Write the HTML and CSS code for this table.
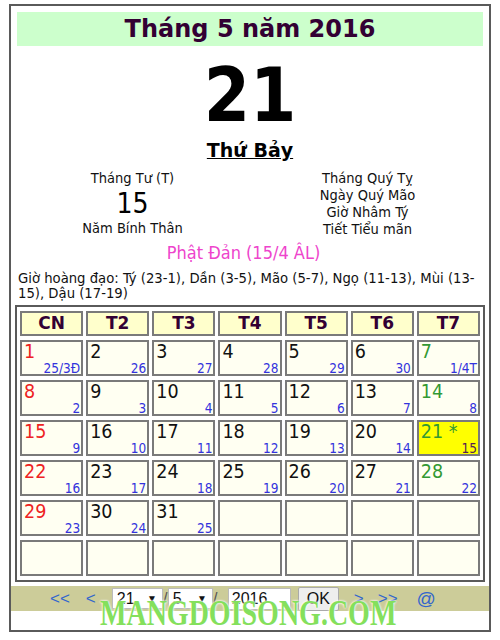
FILE: index.html
```html
<!DOCTYPE html>
<html lang="vi">
<head>
<meta charset="utf-8">
<title>Lịch tháng 5 năm 2016</title>
<link rel="stylesheet" href="styles.css">
</head>
<body>
<div class="cal">
  <div class="band">Tháng 5 năm 2016</div>
  <div class="bigday">21</div>
  <div class="weekday">Thứ Bảy</div>
  <div class="lunar">
    <div class="lcol">
      <div>Tháng Tư (T)</div>
      <div class="lday">15</div>
      <div>Năm Bính Thân</div>
    </div>
    <div class="lcol">
      <div>Tháng Quý Tỵ</div>
      <div>Ngày Quý Mão</div>
      <div>Giờ Nhâm Tý</div>
      <div>Tiết Tiểu mãn</div>
    </div>
  </div>
  <div class="event">Phật Đản (15/4 ÂL)</div>
  <div class="hours">Giờ hoàng đạo: Tý (23-1), Dần (3-5), Mão (5-7), Ngọ (11-13), Mùi (13-15), Dậu (17-19)</div>
  <table class="grid">
    <thead>
      <tr><th>CN</th><th>T2</th><th>T3</th><th>T4</th><th>T5</th><th>T6</th><th>T7</th></tr>
    </thead>
    <tbody>
      <tr>
        <td><div class="d sun">1</div><div class="l">25/3Đ</div></td>
        <td><div class="d">2</div><div class="l">26</div></td>
        <td><div class="d">3</div><div class="l">27</div></td>
        <td><div class="d">4</div><div class="l">28</div></td>
        <td><div class="d">5</div><div class="l">29</div></td>
        <td><div class="d">6</div><div class="l">30</div></td>
        <td><div class="d sat">7</div><div class="l">1/4T</div></td>
      </tr>
      <tr>
        <td><div class="d sun">8</div><div class="l">2</div></td>
        <td><div class="d">9</div><div class="l">3</div></td>
        <td><div class="d">10</div><div class="l">4</div></td>
        <td><div class="d">11</div><div class="l">5</div></td>
        <td><div class="d">12</div><div class="l">6</div></td>
        <td><div class="d">13</div><div class="l">7</div></td>
        <td><div class="d sat">14</div><div class="l">8</div></td>
      </tr>
      <tr>
        <td><div class="d sun">15</div><div class="l">9</div></td>
        <td><div class="d">16</div><div class="l">10</div></td>
        <td><div class="d">17</div><div class="l">11</div></td>
        <td><div class="d">18</div><div class="l">12</div></td>
        <td><div class="d">19</div><div class="l">13</div></td>
        <td><div class="d">20</div><div class="l">14</div></td>
        <td class="today"><div class="d sat">21 *</div><div class="l">15</div></td>
      </tr>
      <tr>
        <td><div class="d sun">22</div><div class="l">16</div></td>
        <td><div class="d">23</div><div class="l">17</div></td>
        <td><div class="d">24</div><div class="l">18</div></td>
        <td><div class="d">25</div><div class="l">19</div></td>
        <td><div class="d">26</div><div class="l">20</div></td>
        <td><div class="d">27</div><div class="l">21</div></td>
        <td><div class="d sat">28</div><div class="l">22</div></td>
      </tr>
      <tr>
        <td><div class="d sun">29</div><div class="l">23</div></td>
        <td><div class="d">30</div><div class="l">24</div></td>
        <td><div class="d">31</div><div class="l">25</div></td>
        <td></td><td></td><td></td><td></td>
      </tr>
      <tr>
        <td></td><td></td><td></td><td></td><td></td><td></td><td></td>
      </tr>
    </tbody>
  </table>
  <div class="nav">
    <a class="lnk first">&lt;&lt;</a>
    <a class="lnk prev">&lt;</a>
    <span class="sel s1">21<span class="arr">▼</span></span>
    <span class="slash">/</span>
    <span class="sel s2">5<span class="arr">▼</span></span>
    <span class="slash">/</span>
    <span class="year">2016</span>
    <span class="ok">OK</span>
    <a class="lnk next">&gt;</a>
    <a class="lnk last">&gt;&gt;</a>
    <a class="lnk at">@</a>
  </div>
  <div class="mark">MANGDOISONG.COM</div>
</div>
</body>
</html>
```
FILE: styles.css
```css
html, body {
  margin: 0;
  padding: 0;
  background: #fff;
}
body {
  font-family: "DejaVu Sans Condensed", "DejaVu Sans", sans-serif;
  color: #111;
}
.cal {
  position: relative;
  box-sizing: border-box;
  width: 482px;
  height: 628px;
  margin: 4px 0 0 9px;
  border: 2px solid #5a5a5a;
  padding: 6px 4px 0;
}
.band {
  margin: 0 2px;
  height: 34px;
  line-height: 34px;
  background: #ccffcc;
  color: #330033;
  text-align: center;
  font-family: "DejaVu Sans", sans-serif;
  font-weight: bold;
  font-size: 24px;
}
.bigday {
  margin-top: 12px;
  height: 75px;
  line-height: 75px;
  text-align: center;
  font-family: "DejaVu Sans Condensed", "DejaVu Sans", sans-serif;
  font-weight: bold;
  font-size: 74px;
  color: #000;
}
.weekday {
  margin-top: 7px;
  height: 20px;
  line-height: 20px;
  text-align: center;
  font-family: "DejaVu Sans", sans-serif;
  font-weight: bold;
  font-size: 19px;
  text-decoration: underline;
  color: #000;
}
.lunar {
  margin-top: 10px;
  display: grid;
  grid-template-columns: 1fr 1fr;
  font-size: 14.5px;
  line-height: 17px;
  text-align: center;
  color: #111;
}
.lday {
  font-size: 28px;
  line-height: 33px;
  color: #000;
}
.event {
  margin-top: 6px;
  padding-right: 13px;
  height: 18px;
  line-height: 18px;
  text-align: center;
  font-size: 18px;
  color: #ee44cc;
}
.hours {
  margin: 8px 2px 0 3px;
  font-size: 14.7px;
  line-height: 15px;
  color: #111;
}
.grid {
  margin-top: 5px;
  width: 100%;
  border: 2px solid #5a5a5a;
  border-spacing: 3px 4px;
  table-layout: fixed;
}
.grid th {
  height: 25px;
  padding: 0;
  box-sizing: border-box;
  border: 2px solid #7a7a7a;
  background: #ffffcc;
  color: #330033;
  font-family: "DejaVu Sans", sans-serif;
  font-weight: bold;
  font-size: 17px;
  line-height: 21px;
  text-align: center;
}
.grid td {
  height: 36px;
  box-sizing: border-box;
  padding: 0 1px 0 2px;
  border: 2px solid #7a7a7a;
  background: #fffff2;
  vertical-align: top;
}
.grid td.today {
  background: #ffff00;
}
.d {
  font-size: 19.5px;
  line-height: 20px;
  color: #111;
}
.d.sun { color: #ee2222; }
.d.sat { color: #339933; }
.l {
  text-align: right;
  font-size: 13.5px;
  line-height: 12px;
  color: #3333dd;
}
.today .l { color: #552255; }
.nav {
  margin: 4px -4px 0;
  height: 25px;
  background: #cccc99;
  display: flex;
  align-items: center;
  padding-left: 39px;
  font-family: "Liberation Sans", sans-serif;
  font-size: 16px;
}
.lnk {
  color: #3366cc;
  font-size: 17px;
}
.prev { margin-left: 16px; }
.sel {
  margin-left: 16px;
  box-sizing: border-box;
  height: 21px;
  line-height: 19px;
  background: #fff;
  border: 1px solid #bbb;
  padding-left: 4px;
  display: flex;
  justify-content: space-between;
  color: #111;
}
.s1 { width: 51px; }
.s2 { width: 45px; margin-left: 0; }
.arr {
  font-size: 10px;
  padding-right: 5px;
}
.slash {
  width: 5px;
  text-align: center;
  color: #555;
}
.year {
  margin-left: 10px;
  box-sizing: border-box;
  width: 63px;
  height: 22px;
  line-height: 20px;
  background: #fff;
  border: 1px solid #bbb;
  padding-left: 3px;
  color: #111;
}
.ok {
  margin-left: 7px;
  box-sizing: border-box;
  width: 41px;
  height: 24px;
  line-height: 22px;
  text-align: center;
  background: #eeeeee;
  border: 1px solid #aaa;
  border-radius: 2px;
  color: #111;
}
.next { margin-left: 15px; }
.last { margin-left: 14px; }
.at { margin-left: 19px; font-size: 19px; }
.mark {
  position: absolute;
  left: 89px;
  top: 589px;
  font-family: "Liberation Serif", serif;
  font-weight: bold;
  font-size: 28px;
  line-height: 28px;
  transform: scaleY(1.3);
  transform-origin: top left;
  color: #84e05c;
  text-shadow: 0 0 2px #fff, 0 0 2px #fff;
  white-space: nowrap;
}
```
